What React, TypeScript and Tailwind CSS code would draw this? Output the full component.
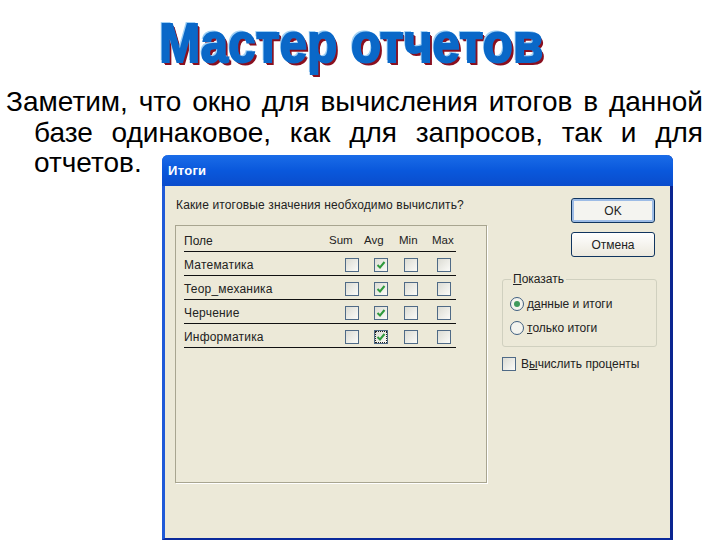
const FONT = "font-['Liberation_Sans',Arial,sans-serif]";

const rows = [
  { name: "Математика", checked: false },
  { name: "Теор_механика", checked: false },
  { name: "Черчение", checked: false },
  { name: "Информатика", checked: true },
];

function XpCheck({ checked = false, focus = false }: { checked?: boolean; focus?: boolean }) {
  return (
    <span
      className={`flex h-[14px] w-[14px] items-center justify-center border border-[#4f6a86] bg-gradient-to-br from-[#dcdcd4] to-[#fbfbf8] ${
        focus ? "outline outline-1 -outline-offset-2 outline-dotted outline-[#222]" : ""
      }`}
    >
      {checked && (
        <svg width="10" height="10" viewBox="0 0 10 10">
          <path d="M1.5 5 L4 7.5 L8.5 2" fill="none" stroke="#2f9a3c" strokeWidth="2" />
        </svg>
      )}
    </span>
  );
}

function XpRadio({ checked = false }: { checked?: boolean }) {
  return (
    <span className="flex h-[14px] w-[14px] items-center justify-center rounded-full border border-[#3f5f80] bg-[#f4f4ee]">
      {checked && <span className="h-[6px] w-[6px] rounded-full bg-[#3f9a5c]" />}
    </span>
  );
}

function Row({ name, focus }: { name: string; focus: boolean }) {
  return (
    <div className="flex h-[24px] items-center border-b border-[#111] pt-[2px]">
      <span className="w-[161px] text-[12px] tracking-[0.2px] text-[#222]">{name}</span>
      <span className="w-[29px]">
        <XpCheck />
      </span>
      <span className="w-[30px]">
        <XpCheck checked focus={focus} />
      </span>
      <span className="w-[33px]">
        <XpCheck />
      </span>
      <XpCheck />
    </div>
  );
}

function XpButton({ label, active = false }: { label: string; active?: boolean }) {
  return (
    <div
      className={`flex h-[25px] w-[84px] items-center justify-center rounded-[3px] border border-[#10355f] text-[12px] text-[#222] ${
        active
          ? "bg-[#f4f4f0] shadow-[inset_0_0_0_2px_#9dbce6]"
          : "bg-gradient-to-b from-white to-[#ece9de]"
      }`}
    >
      {label}
    </div>
  );
}

export default function App() {
  return (
    <div className={`h-[540px] w-[720px] overflow-hidden bg-white ${FONT}`}>
      {/* TITLE */}
      <h1 className="flex h-[87px] items-center justify-center overflow-hidden whitespace-nowrap pb-[2px] pr-[18px]">
        <span className="scale-x-[0.88] text-[56px] font-bold leading-none text-[#0a68c8] [-webkit-text-stroke:2px_#0a68c8] [text-shadow:-2px_-2px_0_#9fd0f5,2px_2px_0_#8a1020,3px_3px_0_#8a1020]">
          Мастер отчетов
        </span>
      </h1>

      {/* TEXT */}
      <p className="ml-[6px] w-[697px] pl-[28px] text-justify text-[28px] leading-[30.5px] -indent-[28px] text-black">
        Заметим, что окно для вычисления итогов в данной базе одинаковое, как для запросов, так и для отчетов.
      </p>

      {/* DIALOG */}
      <div className="relative ml-[162px] -mt-[23.5px] flex h-[385px] w-[511px] flex-col rounded-t-[6px] border-b-[2px] border-l-[3px] border-r-[3px] border-b-[#0a2a9c] border-l-[#1f5ad8] border-r-[#0a2590] bg-[#ece9d8]">
        <div className="-mx-[3px] flex h-[31px] items-center rounded-t-[6px] bg-gradient-to-b from-[#1a6ce8] via-[#0a58dc] to-[#0a4ccc] pl-[6px] text-[13px] font-bold tracking-[0.3px] text-white">
          Итоги
        </div>

        <div className="flex pl-[10px] pt-[12px]">
          {/* LEFT */}
          <div className="w-[312px]">
            <div className="pl-[1px] text-[12px] leading-[14px] tracking-[0.14px] text-[#222]">
              Какие итоговые значения необходимо вычислить?
            </div>
            <div className="mt-[13px] h-[258px] border border-[#a8a590] px-[8px] pt-[5px] shadow-[1px_1px_0_#fff]">
              <div className="w-[272px]">
                <div className="flex h-[21px] items-center border-b border-[#111] text-[11.5px] text-[#222]">
                  <span className="w-[145px] text-[12px]">Поле</span>
                  <span className="w-[35px]">Sum</span>
                  <span className="w-[35px]">Avg</span>
                  <span className="w-[33px]">Min</span>
                  <span>Max</span>
                </div>
                {rows.map((r) => (
                  <Row key={r.name} name={r.name} focus={r.checked} />
                ))}
              </div>
            </div>
          </div>

          {/* RIGHT */}
          <div className="ml-[15px] w-[155px]">
            <div className="ml-[69px] flex flex-col gap-[9px]">
              <XpButton label="OK" active />
              <XpButton label="Отмена" />
            </div>
            <div className="relative mt-[22px] flex h-[68px] flex-col gap-[10px] rounded-[3px] border border-[#d0d0bf] pl-[7px] pt-[17px]">
              <span className="absolute -top-[8px] left-[8px] bg-[#ece9d8] px-[2px] text-[12px] leading-[14px] text-[#222]">
                <u>П</u>оказать
              </span>
              <div className="flex h-[14px] items-center gap-[3px] text-[12px] text-[#222]">
                <XpRadio checked />
                <span>
                  д<u>а</u>нные и итоги
                </span>
              </div>
              <div className="flex h-[14px] items-center gap-[3px] text-[12px] text-[#222]">
                <XpRadio />
                <span>
                  <u>т</u>олько итоги
                </span>
              </div>
            </div>
            <div className="mt-[8px] flex items-center gap-[5px] text-[12px] text-[#222]">
              <XpCheck />
              <span>
                В<u>ы</u>числить проценты
              </span>
            </div>
          </div>
        </div>
      </div>
    </div>
  );
}
